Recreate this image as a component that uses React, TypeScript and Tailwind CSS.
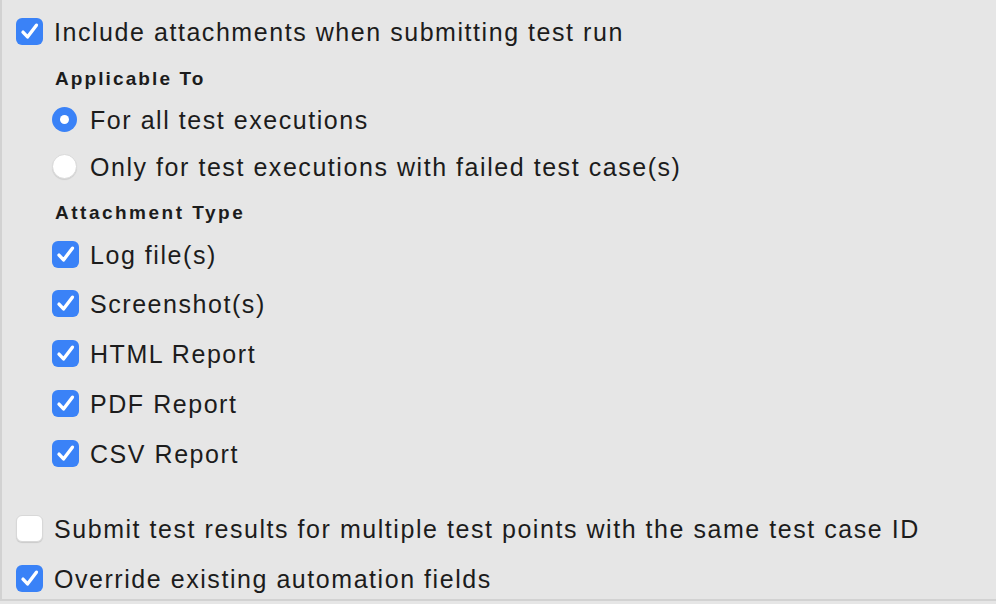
import React from 'react';

function CheckBox({ checked }: { checked: boolean }) {
  if (!checked) {
    return <span className="block w-[27px] h-[27px] shrink-0 rounded-[6px] bg-white border border-[#d8d8d8] shadow-[0_1px_1px_rgba(0,0,0,0.12)]" />;
  }
  return (
    <span className="flex items-center justify-center w-[27px] h-[27px] shrink-0 rounded-[6px] bg-[#3a82f7]">
      <svg className="w-[21px] h-[21px]" viewBox="0 0 20 20" fill="none">
        <path d="M3.8 10.6l4.3 4.6L16.6 4" stroke="white" strokeWidth="3.2" strokeLinecap="round" strokeLinejoin="round" />
      </svg>
    </span>
  );
}

function Radio({ checked }: { checked: boolean }) {
  if (!checked) {
    return <span className="block w-[25px] h-[25px] shrink-0 rounded-full bg-white border border-[#dadada] shadow-[0_1px_1px_rgba(0,0,0,0.1)]" />;
  }
  return (
    <span className="flex items-center justify-center w-[25px] h-[25px] shrink-0 rounded-full bg-[#3a82f7]">
      <span className="block w-[9px] h-[9px] rounded-full bg-white" />
    </span>
  );
}

const attachmentTypes = ['Log file(s)', 'Screenshot(s)', 'HTML Report', 'PDF Report', 'CSV Report'];

export default function App() {
  return (
    <div className="w-[996px] h-[604px] bg-[#e6e6e6] overflow-hidden" style={{ fontFamily: '"Liberation Sans", Arial, sans-serif' }}>
      <div className="h-[601px] border-l-2 border-b-2 border-[#d2d2d2] bg-[#e6e6e6] pt-[6px] overflow-hidden text-[#1c1c1c] text-[25px] tracking-[1.55px] whitespace-nowrap">
        {/* Include attachments */}
        <label className="flex items-center gap-[11px] h-[50px] pl-[14px]">
          <CheckBox checked />
          <span className="pt-[4px]">Include attachments when submitting test run</span>
        </label>

        <div className="pl-[50px]">
          <div className="flex items-center h-[40px] pl-[3px] pt-[6px] text-[19px] font-bold tracking-[2.1px]">Applicable To</div>
          <label className="flex items-center gap-[13px] h-[46px]">
            <Radio checked />
            <span className="pt-[4px]">For all test executions</span>
          </label>
          <label className="flex items-center gap-[13px] h-[48px]">
            <Radio checked={false} />
            <span className="pt-[4px]">Only for test executions with failed test case(s)</span>
          </label>

          <div className="flex items-center h-[40px] pl-[3px] pt-[6px] text-[19px] font-bold tracking-[2.5px]">Attachment Type</div>
          <div className="flex flex-col">
            {attachmentTypes.map((t, i) => (
              <label key={t} className={`flex items-center gap-[11px] ${i === 0 ? 'h-[48px]' : 'h-[50px]'}`}>
                <CheckBox checked />
                <span className="pt-[4px]">{t}</span>
              </label>
            ))}
          </div>
        </div>

        <div className="h-[25px]" />

        <label className="flex items-center gap-[11px] h-[50px] pl-[14px]">
          <CheckBox checked={false} />
          <span className="pt-[4px]">Submit test results for multiple test points with the same test case ID</span>
        </label>
        <label className="flex items-center gap-[11px] h-[50px] pl-[14px]">
          <CheckBox checked />
          <span className="pt-[4px]">Override existing automation fields</span>
        </label>
      </div>
    </div>
  );
}
